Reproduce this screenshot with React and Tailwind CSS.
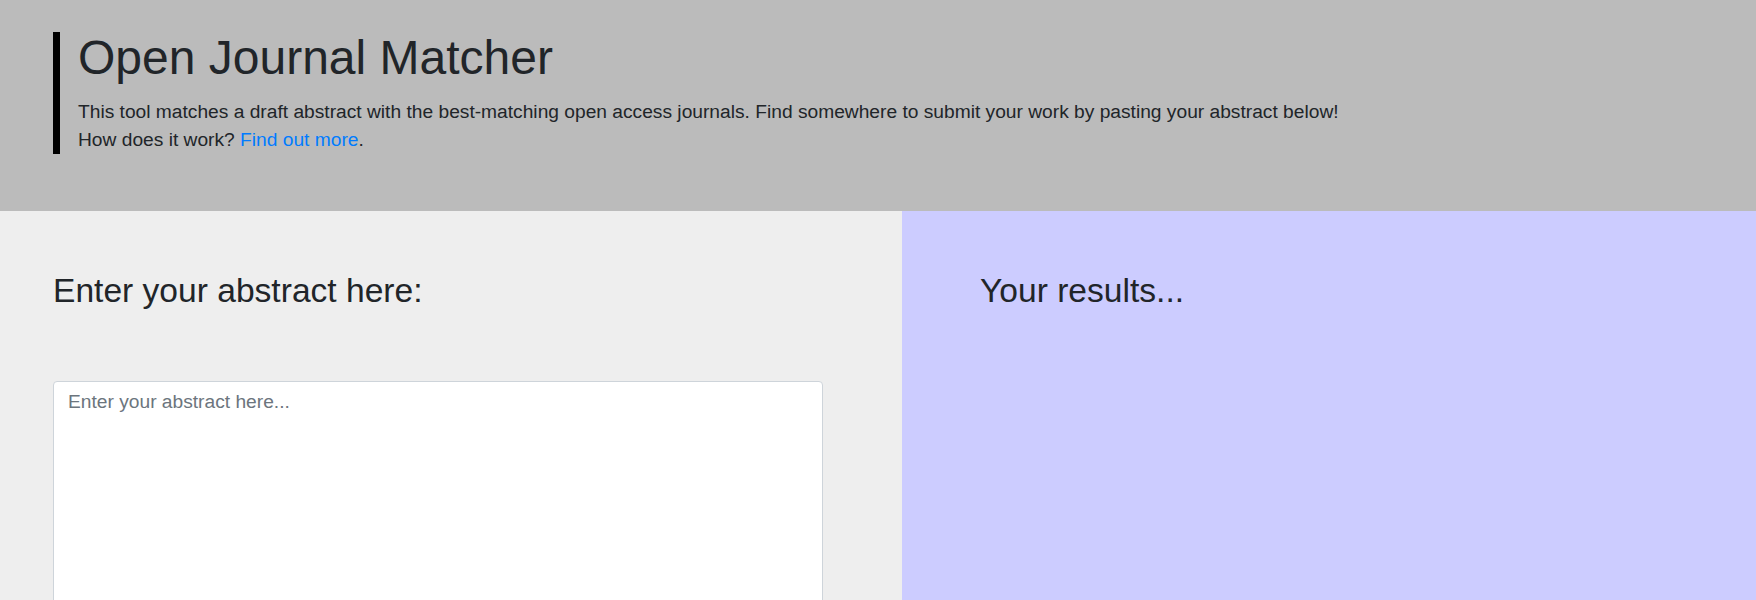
import React, { useState } from "react";

const fontClassName = "font-['Liberation_Sans',Arial,sans-serif]";

const App = () => {
  const [abstract, setAbstract] = useState("");

  return (
    <div className={`min-h-[600px] w-full bg-[#eeeeee] text-[#212529] ${fontClassName}`}>
      {/* Bandeau du haut */}
      <header className="h-[211px] bg-[#bbbbbb] pl-[53px] pt-[32px]">
        <div className="border-l-[7px] border-black pl-[18px]">
          <h1 className="mb-[13px] text-[48px] leading-[1.1] font-normal">Open Journal Matcher</h1>
          <p className="text-[19.2px] leading-[28px]">
            This tool matches a draft abstract with the best-matching open access journals. Find somewhere to submit your work by pasting your abstract below!
            <br />
            How does it work?{" "}
            <a href="#" className="text-[#007bff] hover:underline">
              Find out more
            </a>
            .
          </p>
        </div>
      </header>

      <main className="flex min-h-[389px]">
        <section className="w-[902px] shrink-0 bg-[#eeeeee] pl-[53px] pr-[79px] pt-[60px]">
          <h2 className="text-[33.6px] leading-[1.2] font-normal">Enter your abstract here:</h2>
          <textarea
            value={abstract}
            onChange={(e) => setAbstract(e.target.value)}
            placeholder="Enter your abstract here..."
            className="mt-[70px] block h-[320px] w-full resize-none rounded-[4px] border border-[#ced4da] bg-white px-[14px] py-[6px] text-[19.2px] leading-[1.5] text-[#495057] outline-none placeholder:text-[#6c757d] focus:border-[#80bdff]"
          />
        </section>

        <section className="flex-1 bg-[#ccccff] pl-[78px] pt-[60px]">
          <h2 className="text-[33.6px] leading-[1.2] font-normal">Your results...</h2>
        </section>
      </main>
    </div>
  );
};

export default App;
